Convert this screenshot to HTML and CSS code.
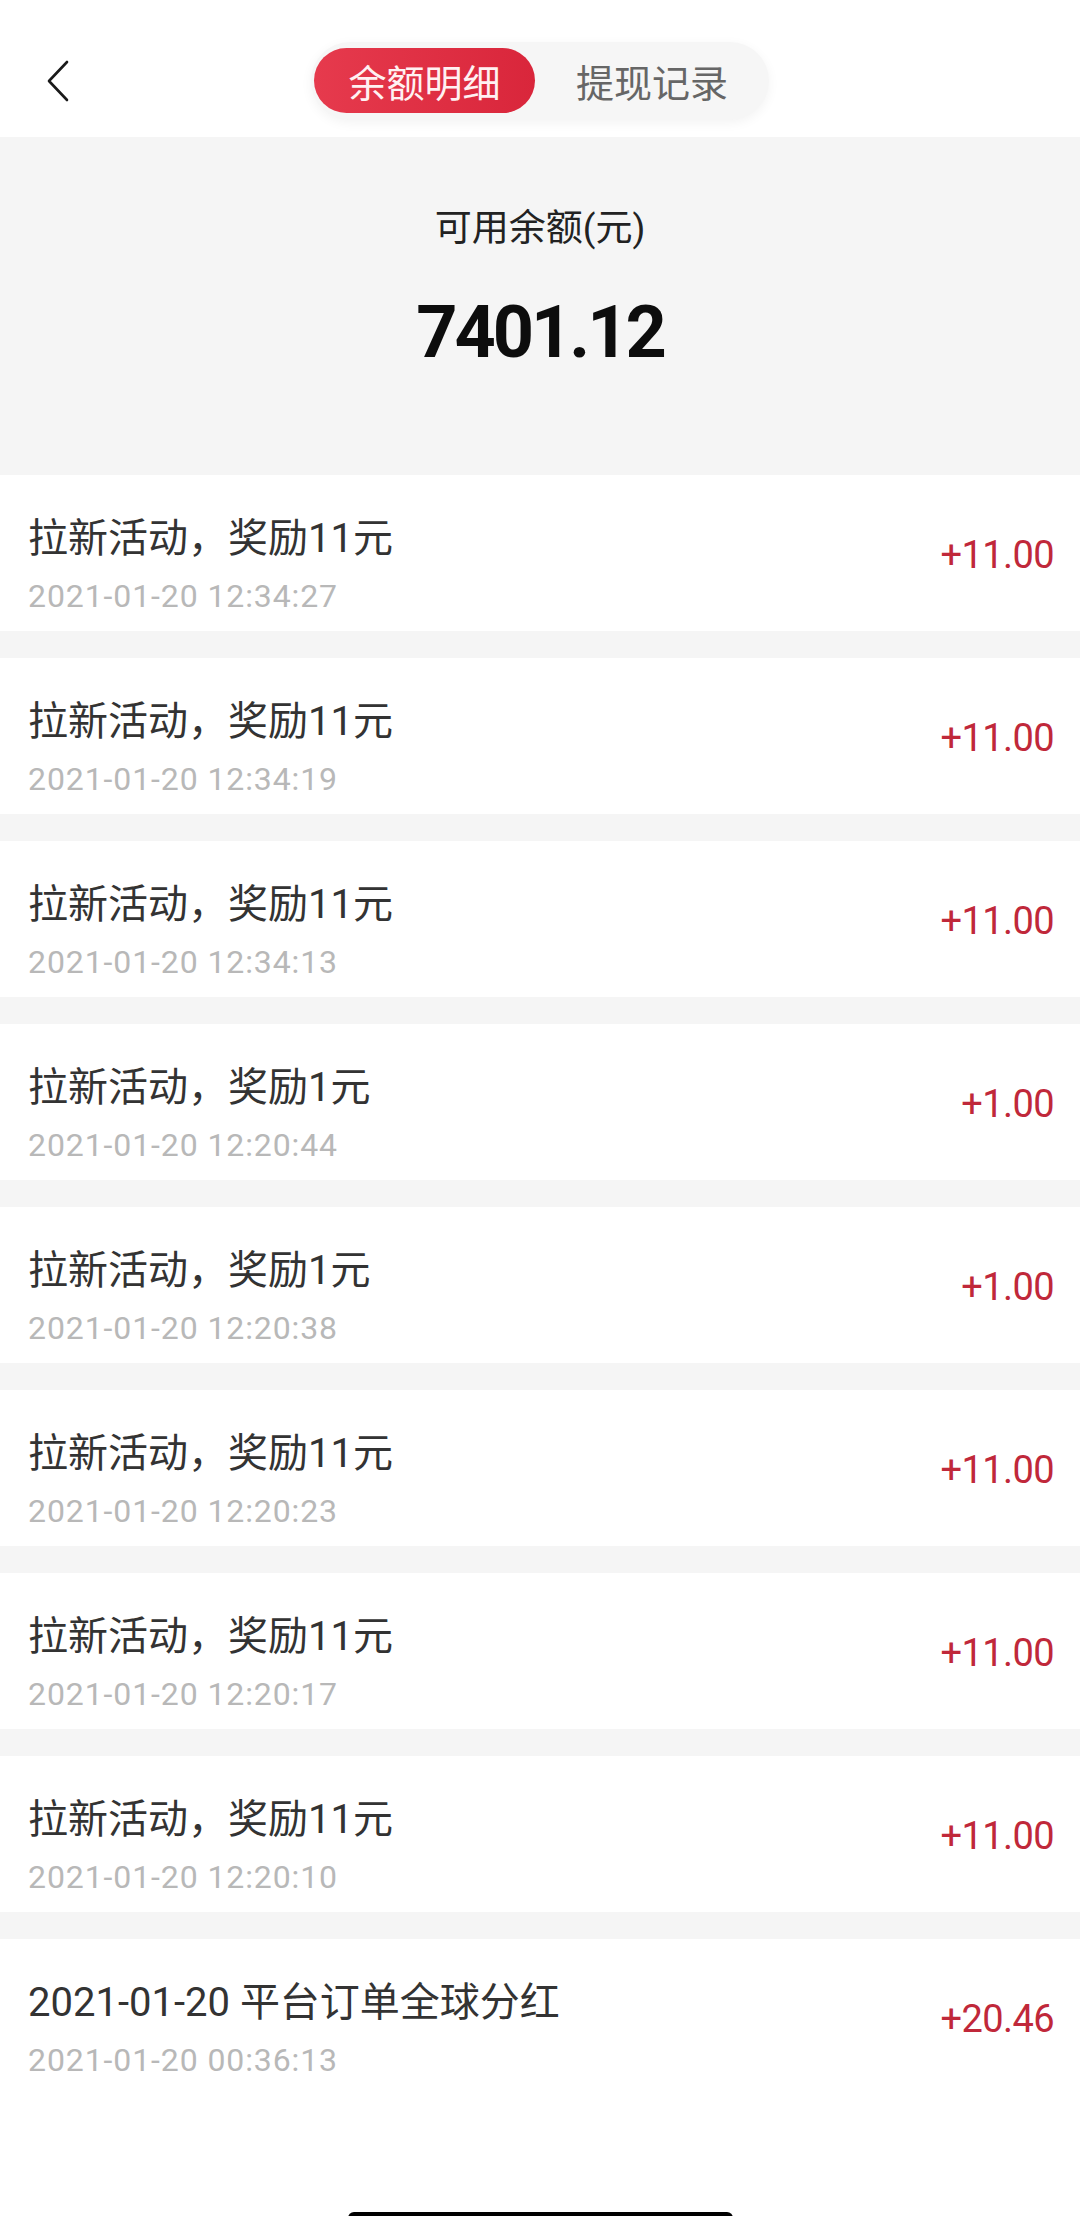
FILE: index.html
```html
<!DOCTYPE html>
<html lang="zh-CN">
<head>
<meta charset="utf-8">
<title>余额明细</title>
<link rel="stylesheet" href="styles.css">
</head>
<body>
<div class="page">
  <header class="topbar">
    <div class="back">
      <svg width="24" height="42" viewBox="0 0 24 42" aria-hidden="true">
        <polyline points="21,2 3,21 21,40" fill="none" stroke="#1a1a1a" stroke-width="2.6" stroke-linecap="round" stroke-linejoin="round"/>
      </svg>
    </div>
    <nav class="tabs">
      <span class="tab tab-active">余额明细</span>
      <span class="tab">提现记录</span>
    </nav>
    <div></div>
  </header>

  <section class="summary">
    <div class="summary-label">可用余额(元)</div>
    <div class="summary-value">7401.12</div>
  </section>

  <ul class="list">
    <li class="row">
      <div class="row-main"><div class="row-title">拉新活动，奖励11元</div><div class="row-time">2021-01-20 12:34:27</div></div>
      <div class="row-amount">+11.00</div>
    </li>
    <li class="row">
      <div class="row-main"><div class="row-title">拉新活动，奖励11元</div><div class="row-time">2021-01-20 12:34:19</div></div>
      <div class="row-amount">+11.00</div>
    </li>
    <li class="row">
      <div class="row-main"><div class="row-title">拉新活动，奖励11元</div><div class="row-time">2021-01-20 12:34:13</div></div>
      <div class="row-amount">+11.00</div>
    </li>
    <li class="row">
      <div class="row-main"><div class="row-title">拉新活动，奖励1元</div><div class="row-time">2021-01-20 12:20:44</div></div>
      <div class="row-amount">+1.00</div>
    </li>
    <li class="row">
      <div class="row-main"><div class="row-title">拉新活动，奖励1元</div><div class="row-time">2021-01-20 12:20:38</div></div>
      <div class="row-amount">+1.00</div>
    </li>
    <li class="row">
      <div class="row-main"><div class="row-title">拉新活动，奖励11元</div><div class="row-time">2021-01-20 12:20:23</div></div>
      <div class="row-amount">+11.00</div>
    </li>
    <li class="row">
      <div class="row-main"><div class="row-title">拉新活动，奖励11元</div><div class="row-time">2021-01-20 12:20:17</div></div>
      <div class="row-amount">+11.00</div>
    </li>
    <li class="row">
      <div class="row-main"><div class="row-title">拉新活动，奖励11元</div><div class="row-time">2021-01-20 12:20:10</div></div>
      <div class="row-amount">+11.00</div>
    </li>
    <li class="row">
      <div class="row-main"><div class="row-title">2021-01-20 平台订单全球分红</div><div class="row-time">2021-01-20 00:36:13</div></div>
      <div class="row-amount">+20.46</div>
    </li>
  </ul>

  <div class="home-indicator"></div>
</div>
</body>
</html>
```

FILE: styles.css
```css
* {
  box-sizing: border-box;
}

html, body {
  margin: 0;
  padding: 0;
  background: #ffffff;
}

body {
  font-family: Roboto, "Noto Sans CJK SC", sans-serif;
  color: #333333;
}

.page {
  width: 1080px;
  min-height: 2216px;
  background: #ffffff;
}

.topbar {
  display: grid;
  grid-template-columns: 1fr auto 1fr;
  align-items: center;
  height: 137px;
  padding: 42px 0 17px;
}

.back {
  display: flex;
  align-items: center;
  padding-left: 46px;
}

.back svg {
  display: block;
}

.tabs {
  display: flex;
  align-items: center;
  width: 458px;
  height: 78px;
  padding: 6px 0 7px 3px;
  border-radius: 39px;
  background: #f6f6f6;
  box-shadow: 0 3px 12px rgba(0, 0, 0, 0.05);
}

.tab {
  display: block;
  width: 234px;
  height: 65px;
  line-height: 65px;
  text-align: center;
  font-size: 38px;
  color: #666666;
  font-family: "Noto Sans CJK SC", sans-serif;
}

.tab-active {
  width: 221px;
  border-radius: 33px;
  background: linear-gradient(90deg, #e63a4d 0%, #d9263b 100%);
  color: #fff1f2;
}

.summary {
  background: #f5f5f5;
  height: 338px;
  padding-top: 70px;
  text-align: center;
}

.summary-label {
  font-family: Roboto, "Noto Sans CJK SC", sans-serif;
  font-size: 37px;
  line-height: 44px;
  color: #222222;
}

.summary-value {
  margin-top: 46px;
  font-family: Roboto, "Liberation Sans", sans-serif;
  font-size: 72px;
  line-height: 72px;
  font-weight: 700;
  letter-spacing: -3px;
  color: #0d0d0d;
}

.list {
  list-style: none;
  margin: 0;
  padding: 0;
  background: #f5f5f5;
}

.row {
  display: flex;
  align-items: center;
  justify-content: space-between;
  height: 156px;
  margin-bottom: 27px;
  padding: 0 26px 0 28px;
  background: #ffffff;
}

.row-main {
  display: flex;
  flex-direction: column;
  gap: 13px;
  padding-top: 25px;
}

.row-title {
  font-size: 40px;
  line-height: 48px;
  color: #333333;
}

.row-time {
  font-size: 32px;
  line-height: 40px;
  letter-spacing: 0.9px;
  color: #b8b8b8;
}

.row-amount {
  font-size: 38px;
  line-height: 44px;
  letter-spacing: -0.6px;
  color: #c0283a;
  padding-top: 4px;
}

.home-indicator {
  position: fixed;
  left: 348px;
  bottom: -8px;
  width: 385px;
  height: 12px;
  border-radius: 6px;
  background: #000000;
}
```
